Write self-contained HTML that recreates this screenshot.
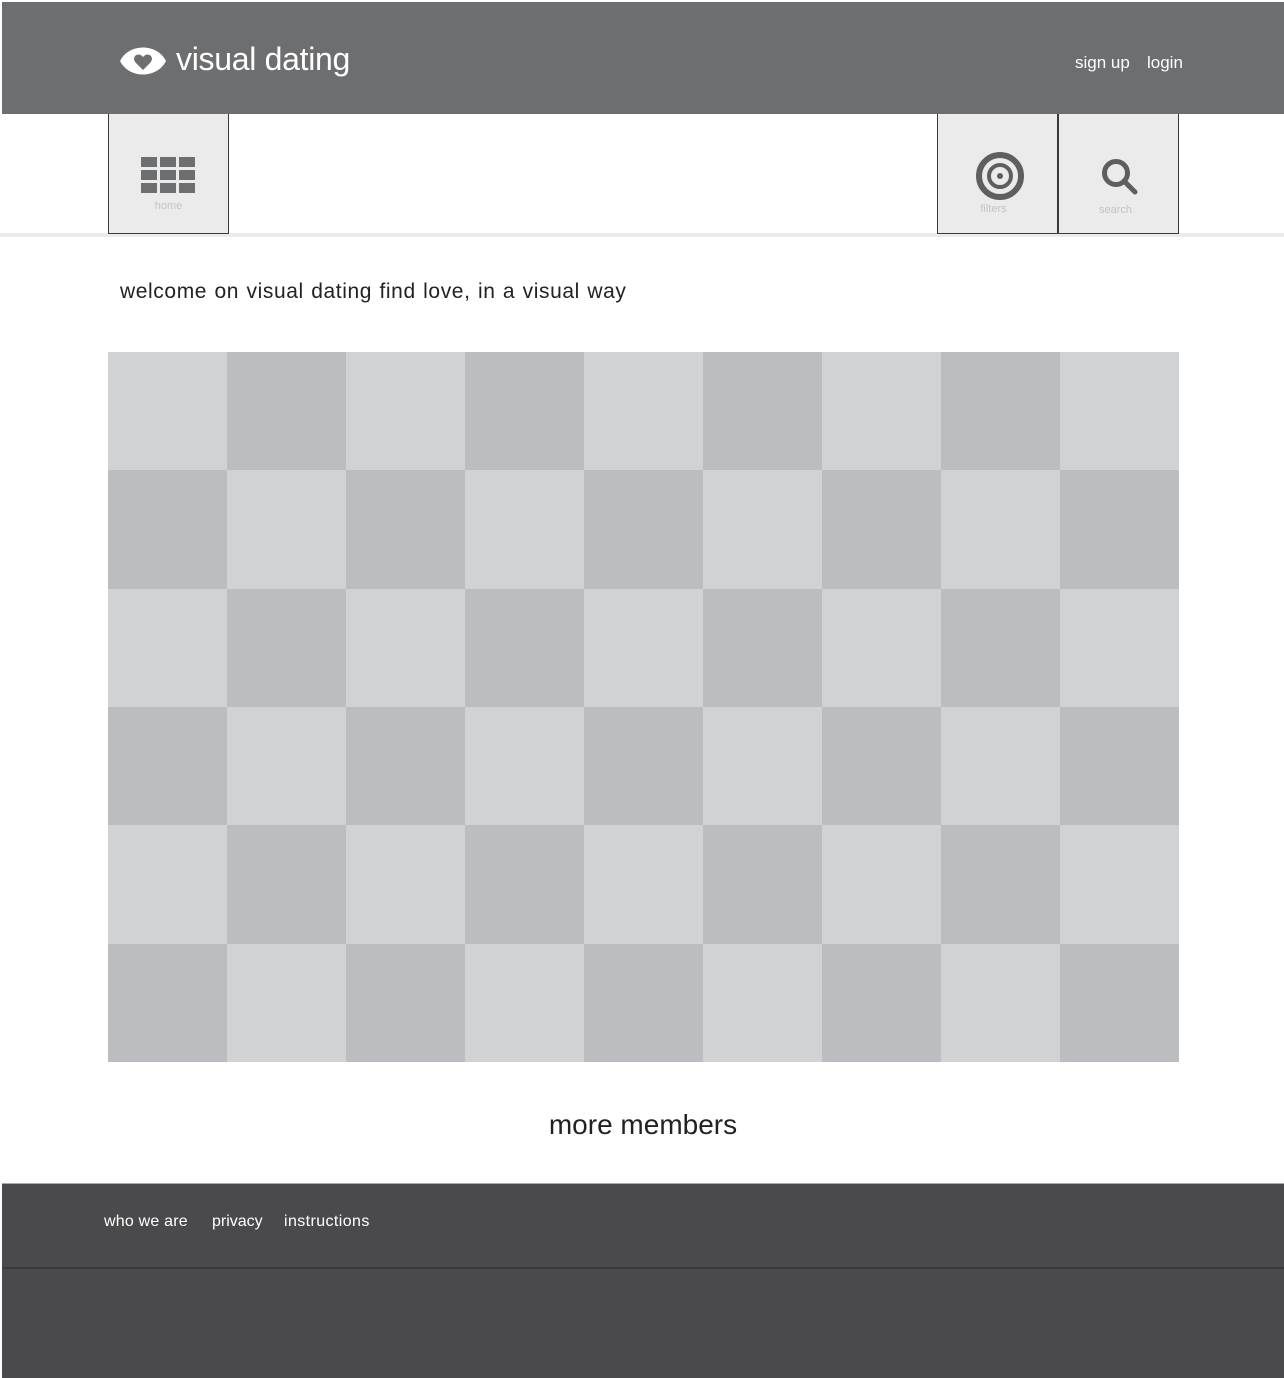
<!DOCTYPE html>
<html><head><meta charset="utf-8"><style>
*{margin:0;padding:0;box-sizing:border-box}
body{width:1284px;height:1378px;background:#fff;font-family:"Liberation Sans",sans-serif;position:relative;overflow:hidden}
.a{position:absolute}
.hdr{left:2px;top:2px;width:1282px;height:112px;background:#6d6e70}
.logo{left:176px;top:41px;color:#fff;font-size:32px;letter-spacing:-0.3px}
.hl{top:53px;color:#fff;font-size:17px}
.btn{top:114px;height:120px;background:#ebebec;border:1px solid #3a3a3a;border-top:none}
.lbl{position:absolute;width:100%;text-align:center;font-size:11px;color:#c3c3c5}
.line{left:0;top:233px;width:1284px;height:4px;background:#ebebeb}
.grid{left:108px;top:352px;width:1071px;height:710px;display:grid;grid-template-columns:repeat(9,1fr);grid-template-rows:repeat(6,1fr)}
.l{background:#d1d2d4}.d{background:#bcbdc0}
.ftr{left:2px;top:1183px;width:1282px;height:195px;background:#4a4a4c;border-top:1px solid #aaa}
.fl{top:1213px;color:#fff;font-size:16px}
</style></head><body>
<div class="a hdr"></div>
<svg class="a" style="left:119px;top:45px" width="48" height="32" viewBox="0 0 48 32"><path d="M1 16 C10 -2 38 -2 47 16 C38 34 10 34 1 16Z" fill="#fff"/><path d="M24 25 L16.5 17.5 Q13.5 13.5 16.5 10.5 Q20.5 8 24 12 Q27.5 8 31.5 10.5 Q34.5 13.5 31.5 17.5Z" fill="#6d6e70"/></svg>
<div class="a logo">visual dating</div>
<div class="a hl" style="left:1075px">sign up</div>
<div class="a hl" style="left:1147px">login</div>
<div class="a line"></div>
<div class="a btn" style="left:108px;width:121px">
<svg class="a" style="left:32px;top:43px" width="54" height="38"><g fill="#6d6e70"><rect x="0" y="0" width="16" height="10"/><rect x="19" y="0" width="16" height="10"/><rect x="38" y="0" width="16" height="10"/><rect x="0" y="13" width="16" height="10"/><rect x="19" y="13" width="16" height="10"/><rect x="38" y="13" width="16" height="10"/><rect x="0" y="26" width="16" height="10"/><rect x="19" y="26" width="16" height="10"/><rect x="38" y="26" width="16" height="10"/></g></svg>
<div class="lbl" style="top:86px">home</div></div>
<div class="a btn" style="left:937px;width:121px">
<svg class="a" style="left:37px;top:37px" width="50" height="50"><circle cx="25" cy="25" r="21" fill="none" stroke="#5f5f61" stroke-width="6"/><circle cx="25" cy="25" r="11" fill="none" stroke="#5f5f61" stroke-width="4"/><circle cx="25" cy="25" r="3" fill="#5f5f61"/></svg>
<div class="lbl" style="top:89px;left:-4px">filters</div></div>
<div class="a btn" style="left:1058px;width:121px">
<svg class="a" style="left:40px;top:42px" width="44" height="44"><circle cx="17" cy="17" r="11.5" fill="none" stroke="#5f5f61" stroke-width="5"/><line x1="25" y1="25" x2="36" y2="36" stroke="#5f5f61" stroke-width="5" stroke-linecap="round"/></svg>
<div class="lbl" style="top:90px;left:-3px">search</div></div>
<div class="a" style="left:120px;top:280px;font-size:21px;color:#222;letter-spacing:0.6px;word-spacing:1px">welcome on visual dating find love, in a visual way</div>
<div class="a grid">
<div class="l"></div><div class="d"></div><div class="l"></div><div class="d"></div><div class="l"></div><div class="d"></div><div class="l"></div><div class="d"></div><div class="l"></div>
<div class="d"></div><div class="l"></div><div class="d"></div><div class="l"></div><div class="d"></div><div class="l"></div><div class="d"></div><div class="l"></div><div class="d"></div>
<div class="l"></div><div class="d"></div><div class="l"></div><div class="d"></div><div class="l"></div><div class="d"></div><div class="l"></div><div class="d"></div><div class="l"></div>
<div class="d"></div><div class="l"></div><div class="d"></div><div class="l"></div><div class="d"></div><div class="l"></div><div class="d"></div><div class="l"></div><div class="d"></div>
<div class="l"></div><div class="d"></div><div class="l"></div><div class="d"></div><div class="l"></div><div class="d"></div><div class="l"></div><div class="d"></div><div class="l"></div>
<div class="d"></div><div class="l"></div><div class="d"></div><div class="l"></div><div class="d"></div><div class="l"></div><div class="d"></div><div class="l"></div><div class="d"></div>
</div>
<div class="a" style="left:0;width:1286px;text-align:center;top:1109px;font-size:28px;color:#222">more members</div>
<div class="a ftr"></div>
<div class="a" style="left:2px;top:1267px;width:1282px;height:2px;background:#3a3a3b"></div>
<div class="a fl" style="left:104px;letter-spacing:0.2px">who we are</div>
<div class="a fl" style="left:212px">privacy</div>
<div class="a fl" style="left:284px;letter-spacing:0.4px">instructions</div>
</body></html>
